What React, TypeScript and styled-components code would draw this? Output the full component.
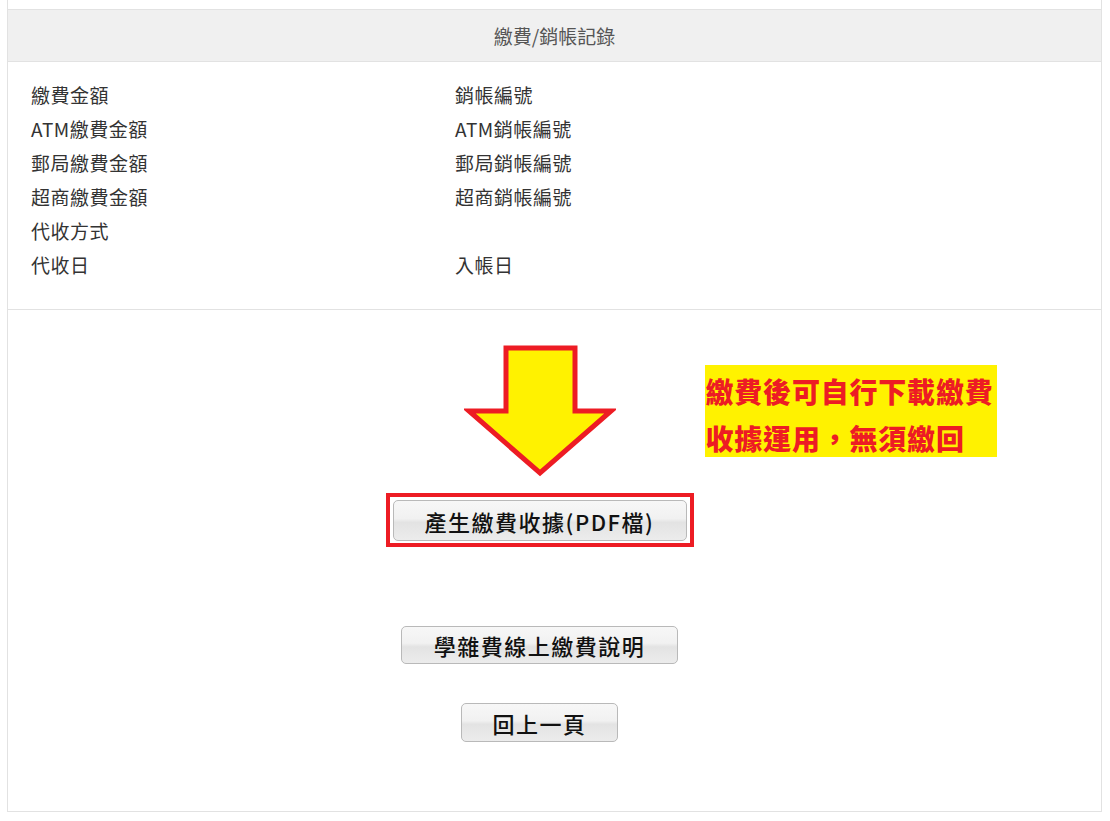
import React from "react";
import styled, { createGlobalStyle } from "styled-components";

const GlobalStyle = createGlobalStyle`
  html, body {
    margin: 0;
    padding: 0;
    background: #ffffff;
  }
  body {
    font-family: "Noto Sans CJK TC", "Liberation Sans", sans-serif;
    color: #333333;
  }
`;

const RED = "#ed1c24";
const YELLOW = "#fff200";

interface Field {
  left: string;
  right?: string;
}

const fields: Field[] = [
  { left: "繳費金額", right: "銷帳編號" },
  { left: "ATM繳費金額", right: "ATM銷帳編號" },
  { left: "郵局繳費金額", right: "郵局銷帳編號" },
  { left: "超商繳費金額", right: "超商銷帳編號" },
  { left: "代收方式" },
  { left: "代收日", right: "入帳日" },
];

const DownArrow = () => (
  <svg width="152" height="132" viewBox="0 0 152 132">
    <polygon
      points="42,3 111,3 111,66 147,66 76,128 5,66 42,66"
      fill={YELLOW}
      stroke={RED}
      strokeWidth="5"
      strokeLinejoin="miter"
    />
  </svg>
);

const App: React.FunctionComponent = () => {
  return (
    <>
      <GlobalStyle />
      <Panel>
        <PanelHeader>繳費/銷帳記錄</PanelHeader>
        <FieldGrid>
          {fields.map((f) => (
            <React.Fragment key={f.left}>
              <FieldLabel>{f.left}</FieldLabel>
              <FieldLabel>{f.right ?? ""}</FieldLabel>
            </React.Fragment>
          ))}
        </FieldGrid>
        <ActionArea>
          <ArrowRow>
            <span />
            <DownArrow />
            <Notice>
              繳費後可自行下載繳費
              <br />
              收據運用，無須繳回
            </Notice>
          </ArrowRow>
          <Highlight>
            <GrayButton $width={294} $height={41}>
              產生繳費收據(PDF檔)
            </GrayButton>
          </Highlight>
          <GrayButton $width={277} $height={38} $top={79}>
            學雜費線上繳費說明
          </GrayButton>
          <GrayButton $width={157} $height={39} $top={39}>
            回上一頁
          </GrayButton>
        </ActionArea>
      </Panel>
    </>
  );
};

const Panel = styled.div`
  margin: 0 8px 9px 7px;
  padding-top: 9px;
  border: 1px solid #e2e2e2;
  border-top: none;
`;

const PanelHeader = styled.div`
  height: 51px;
  display: flex;
  align-items: center;
  justify-content: center;
  background: #f0f0f0;
  border-top: 1px solid #e2e2e2;
  border-bottom: 1px solid #e2e2e2;
  font-size: 19px;
  color: #555555;
`;

const FieldGrid = styled.div`
  display: grid;
  grid-template-columns: 424px 1fr;
  padding: 16px 23px 27px 23px;
  border-bottom: 1px solid #e2e2e2;
`;

const FieldLabel = styled.div`
  height: 34px;
  line-height: 34px;
  font-size: 19px;
  letter-spacing: 0.5px;
  color: #333333;
  white-space: nowrap;
`;

const ActionArea = styled.div`
  display: flex;
  flex-direction: column;
  align-items: center;
  padding: 35px 30px 69px 0;
`;

const ArrowRow = styled.div`
  align-self: stretch;
  display: grid;
  grid-template-columns: 1fr auto 1fr;
  align-items: start;
`;

const Notice = styled.div`
  justify-self: start;
  margin: 20px 0 0 89px;
  width: 292px;
  height: 92px;
  box-sizing: border-box;
  padding: 3px 0 0 1px;
  background: ${YELLOW};
  color: ${RED};
  font-size: 28px;
  font-weight: 900;
  line-height: 47px;
  letter-spacing: 0.8px;
  white-space: nowrap;
`;

const Highlight = styled.div`
  margin-top: 16px;
  padding: 3px 3px 2px 3px;
  border: 4px solid ${RED};
`;

const GrayButton = styled.button<{ $width: number; $height: number; $top?: number }>`
  width: ${(p) => p.$width}px;
  height: ${(p) => p.$height}px;
  margin-top: ${(p) => p.$top ?? 0}px;
  padding: 0;
  border: 1px solid #b9b9b9;
  border-radius: 5px;
  background: linear-gradient(
    to bottom,
    #f7f7f7 0%,
    #f1f1f1 45%,
    #e3e3e3 55%,
    #ececec 100%
  );
  font-family: "Noto Sans CJK TC", "Liberation Sans", sans-serif;
  font-size: 22px;
  font-weight: 500;
  color: #111111;
  letter-spacing: 1.5px;
  cursor: pointer;
`;

export default App;
